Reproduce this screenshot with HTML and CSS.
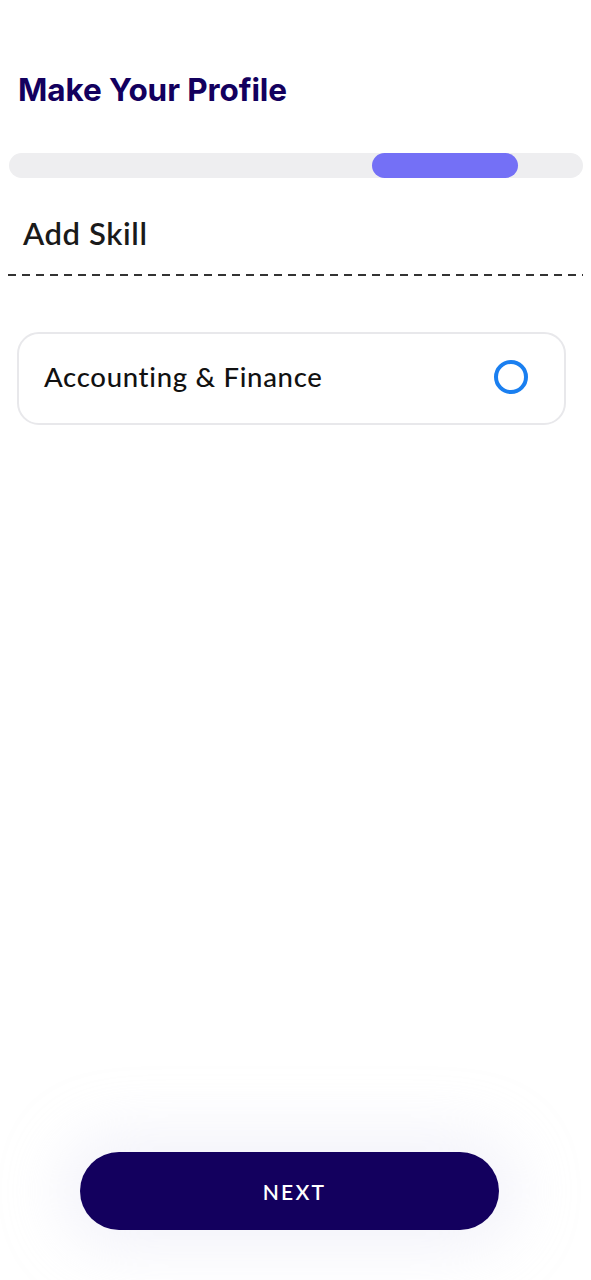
FILE: index.html
```html
<!DOCTYPE html>
<html>
<head>
<meta charset="utf-8">
<link rel="stylesheet" href="styles.css">
</head>
<body>
<div class="page">
  <h1 class="title">Make Your Profile</h1>
  <div class="track"><div class="fill"></div></div>
  <h2 class="section">Add Skill</h2>
  <div class="dash"></div>
  <div class="card">
    <span class="card-label">Accounting &amp; Finance</span>
    <span class="radio"></span>
  </div>
  <div class="spacer"></div>
  <div class="footer">
    <button class="next">NEXT</button>
  </div>
</div>
</body>
</html>
```

FILE: styles.css
```css
html, body {
  margin: 0;
  padding: 0;
  background: #ffffff;
}
.page {
  width: 591px;
  height: 1280px;
  display: flex;
  flex-direction: column;
  box-sizing: border-box;
}
.title {
  margin: 70px 0 0 18px;
  font-family: Inter, "Liberation Sans", sans-serif;
  font-weight: 700;
  font-size: 31.5px;
  line-height: 40px;
  color: #13005e;
  letter-spacing: -0.1px;
}
.track {
  margin: 43px 8px 0 9px;
  height: 25px;
  border-radius: 13px;
  background: #eeeef0;
  display: flex;
  padding-left: 363px;
}
.fill {
  width: 146px;
  height: 25px;
  border-radius: 13px;
  background: #7470f6;
}
.section {
  margin: 35px 0 0 23px;
  font-family: Lato, "Open Sans", sans-serif;
  font-weight: 600;
  font-size: 31px;
  line-height: 40px;
  color: #1a1a1a;
  letter-spacing: 0.6px;
}
.dash {
  margin: 21px 8px 0 8px;
  height: 1.5px;
  background-image: linear-gradient(to right, #333333 0, #333333 8px, transparent 8px, transparent 100%);
  background-size: 14px 1.5px;
  background-repeat: repeat-x;
}
.card {
  margin: 56px 25px 0 17px;
  height: 93px;
  box-sizing: border-box;
  border: 2px solid #e8e8eb;
  border-radius: 22px;
  display: flex;
  align-items: center;
  justify-content: space-between;
  padding: 0 36px 4px 25px;
}
.card-label {
  font-family: Lato, "Open Sans", sans-serif;
  font-weight: 500;
  font-size: 27.5px;
  color: #111111;
  letter-spacing: 0.7px;
}
.radio {
  width: 26px;
  height: 26px;
  margin-top: 2px;
  border: 4px solid #1a7ff0;
  border-radius: 50%;
}
.spacer {
  flex: 1;
}
.footer {
  display: flex;
  justify-content: center;
  padding: 0 12px 50px 0;
}
.next {
  width: 419px;
  height: 78px;
  padding: 0 0 0 10px;
  border: none;
  border-radius: 39px;
  background: #13005e;
  color: #ffffff;
  font-family: Lato, "Open Sans", sans-serif;
  font-weight: 600;
  font-size: 21px;
  letter-spacing: 2.2px;
  box-shadow: 0 0 60px 20px rgba(220, 222, 240, 0.35);
}
```
